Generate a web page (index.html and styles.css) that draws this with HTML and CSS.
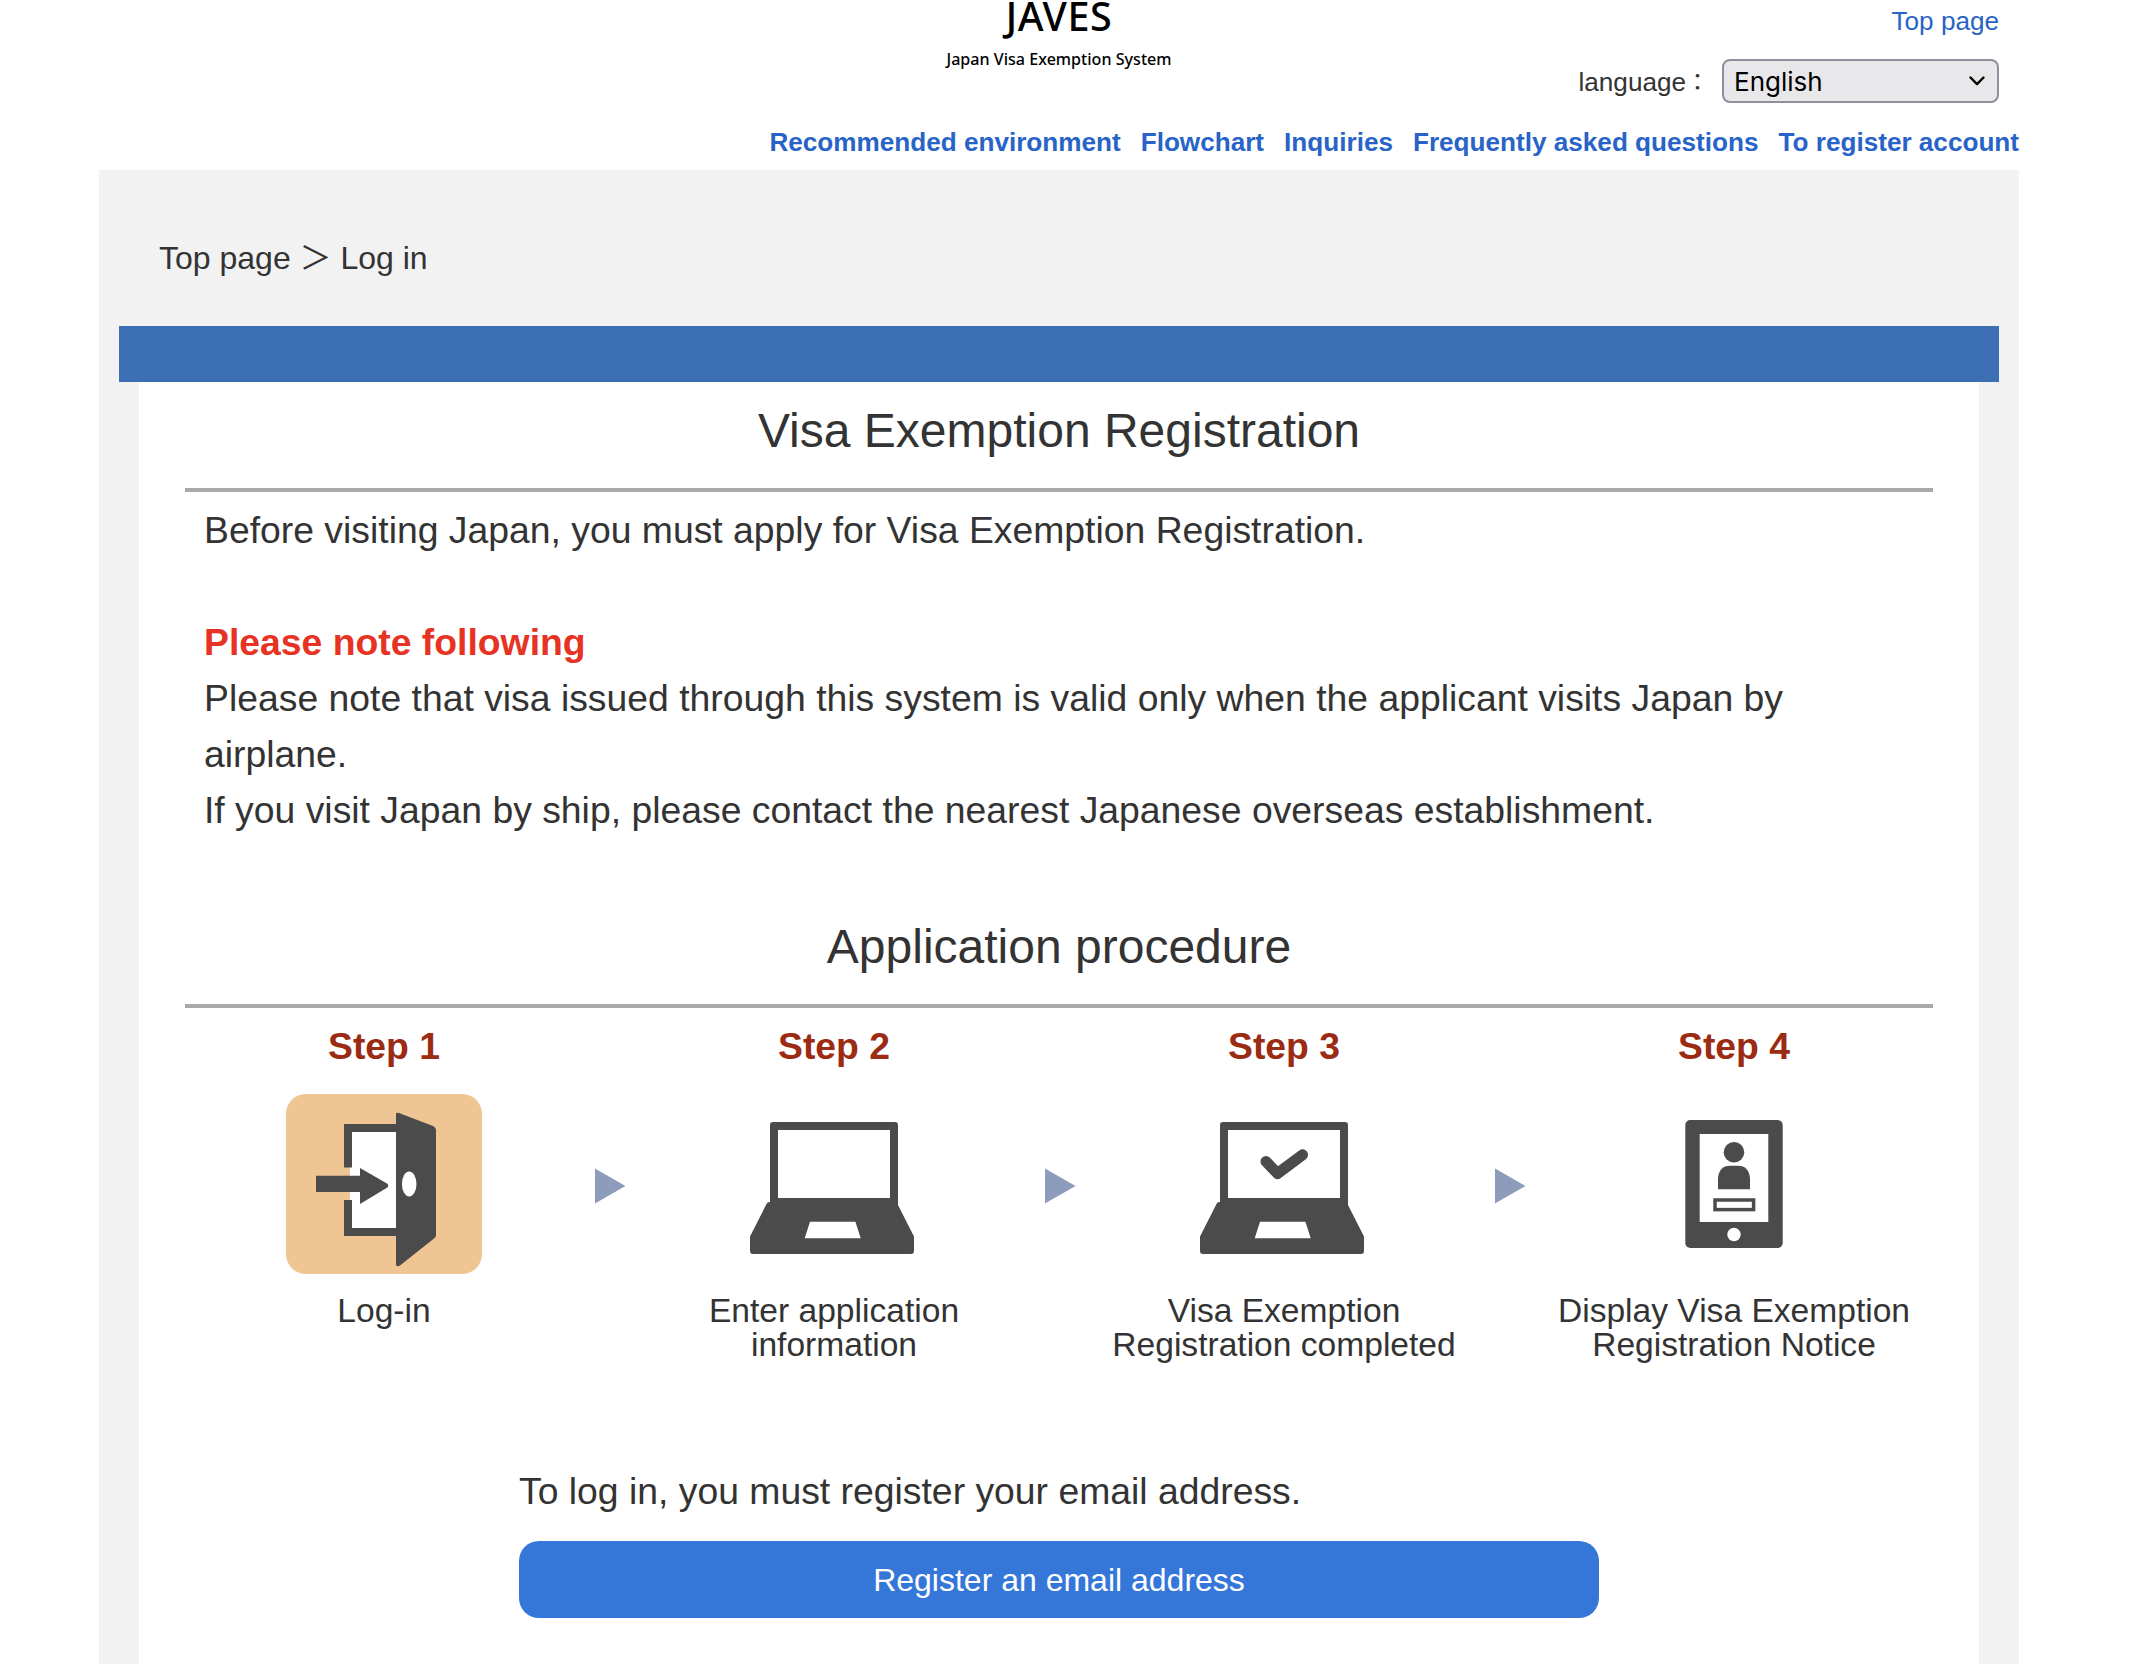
FILE: index.html
```html
<!DOCTYPE html>
<html lang="en">
<head>
<meta charset="utf-8">
<title>JAVES - Japan Visa Exemption System</title>
<link rel="stylesheet" href="styles.css">
</head>
<body>
<div class="page">
  <header class="header">
    <div class="header-main">
      <div class="logo">
        <div class="logo-name">JAVES</div>
        <div class="logo-sub">Japan Visa Exemption System</div>
      </div>
      <div class="tools">
        <a class="top-link" href="#">Top page</a>
        <div class="language">
          <span class="language-label">language<span class="colon">：</span></span>
          <div class="select" role="combobox" aria-expanded="false" tabindex="0">
            <span>English</span>
            <svg class="chevron" viewBox="0 0 16 10"><path d="M1.5 1.5 8 8.2 14.5 1.5"/></svg>
          </div>
        </div>
      </div>
    </div>
    <nav class="nav">
      <a href="#">Recommended environment</a>
      <a href="#">Flowchart</a>
      <a href="#">Inquiries</a>
      <a href="#">Frequently asked questions</a>
      <a href="#">To register account</a>
    </nav>
  </header>
  <main class="main">
    <div class="breadcrumb">Top page ＞ Log in</div>
    <div class="band"></div>
    <div class="content">
      <h1 class="heading">Visa Exemption Registration</h1>
      <div class="copy">
        <p>Before visiting Japan, you must apply for Visa Exemption Registration.</p>
        <p class="notice">Please note following</p>
        <p>Please note that visa issued through this system is valid only when the applicant visits Japan by airplane.</p>
        <p>If you visit Japan by ship, please contact the nearest Japanese overseas establishment.</p>
      </div>
      <h2 class="heading heading-procedure">Application procedure</h2>
      <div class="steps">
        <div class="step">
          <div class="step-name">Step 1</div>
          <svg class="icon icon-current" viewBox="0 0 196 180">
            <path class="paper" d="M64 34h48v104H64z"/>
            <path class="ink" d="M58 30h54v8H66v35.5h-8zM58 106h8v28h46v8H58z"/>
            <path class="ink" d="M110 20q0-2 3-1l34 13q3 1.300 3 4v105q0 2-2 3.500l-34 27q-4 2-4-1z"/>
            <ellipse class="paper" cx="123.200" cy="90" rx="7.300" ry="12.500"/>
            <path class="ink" d="M30 81.700h44V74l27 15.500q2.500 2.200 0 4.200L74 110V98H30z"/>
          </svg>
          <div class="step-text">Log-in</div>
        </div>
        <div class="next"><svg class="arrow" viewBox="0 0 32 36"><path d="M1 .5 31.500 18 1 35.500z"/></svg></div>
        <div class="step">
          <div class="step-name">Step 2</div>
          <svg class="icon" viewBox="0 0 196 180">
            <path class="ink" fill-rule="evenodd" d="M34 31q0-3 3-3h122q3 0 3 3v80l16 31.500V157q0 3-3 3H17q-3 0-3-3v-14.500L31 109q1-1 3-1zM42 36v68h112V36zM74 127.700l-5.300 16.600h56l-5.300-16.600z"/>
          </svg>
          <div class="step-text">Enter application<br>information</div>
        </div>
        <div class="next"><svg class="arrow" viewBox="0 0 32 36"><path d="M1 .5 31.500 18 1 35.500z"/></svg></div>
        <div class="step">
          <div class="step-name">Step 3</div>
          <svg class="icon" viewBox="0 0 196 180">
            <path class="ink" fill-rule="evenodd" d="M34 31q0-3 3-3h122q3 0 3 3v80l16 31.500V157q0 3-3 3H17q-3 0-3-3v-14.500L31 109q1-1 3-1zM42 36v68h112V36zM74 127.700l-5.300 16.600h56l-5.300-16.600z"/>
            <path class="tick" d="M80 67.500 91.500 79.500 116.500 60.800"/>
          </svg>
          <div class="step-text">Visa Exemption<br>Registration completed</div>
        </div>
        <div class="next"><svg class="arrow" viewBox="0 0 32 36"><path d="M1 .5 31.500 18 1 35.500z"/></svg></div>
        <div class="step">
          <div class="step-name">Step 4</div>
          <svg class="icon" viewBox="0 0 196 180">
            <rect class="ink" x="49.300" y="26" width="97.400" height="128" rx="5"/>
            <path class="paper" d="M63.700 40h68.600v88H63.700z"/>
            <circle class="ink" cx="98" cy="58.300" r="10.300"/>
            <path class="ink" d="M82 95.300V84.500Q83 71.700 94 71.700h8q11 0 12 12.800v10.800z"/>
            <rect class="field" x="79" y="106" width="38.600" height="9.600"/>
            <circle class="paper" cx="98" cy="140.500" r="6.700"/>
          </svg>
          <div class="step-text">Display Visa Exemption<br>Registration Notice</div>
        </div>
      </div>
      <div class="register">
        <p>To log in, you must register your email address.</p>
        <a class="button" href="#">Register an email address</a>
      </div>
    </div>
  </main>
</div>
</body>
</html>
```

FILE: styles.css
```css
* {
  box-sizing: border-box;
}

body {
  margin: 0;
  background: #fff;
  color: #333;
  font-family: "Liberation Sans", "Noto Sans CJK JP", sans-serif;
  overflow: hidden;
}

a {
  color: #2864c7;
  text-decoration: none;
}

p {
  margin: 0;
}

.page {
  display: flex;
  flex-direction: column;
  width: 1920px;
  height: 1664px;
  margin-left: 99px;
}

.header {
  height: 170px;
  flex: none;
}

.header-main {
  display: grid;
  grid-template-columns: 1fr 400px 1fr;
  height: 114px;
}

.logo {
  grid-column: 2;
  color: #000;
  font-family: "Noto Sans", sans-serif;
  text-align: center;
}

.logo-name {
  height: 47px;
  font-size: 39.5px;
  font-weight: 500;
  letter-spacing: 0.5px;
  line-height: 33px;
}

.logo-sub {
  font-size: 16.1px;
  font-weight: 500;
  line-height: 24px;
  white-space: nowrap;
}

.tools {
  display: flex;
  flex-direction: column;
  align-items: flex-end;
  padding-right: 20px;
  font-size: 26.13px;
}

.top-link {
  height: 48px;
  line-height: 42px;
}

.language {
  display: flex;
  align-items: center;
  gap: 13px;
  height: 66px;
}

.language-label {
  padding-top: 2px;
  line-height: 46px;
}

.colon {
  font-size: 23px;
  vertical-align: 1px;
}

.select {
  display: flex;
  align-items: center;
  justify-content: space-between;
  width: 277px;
  height: 44px;
  padding: 0 12px 0 10px;
  border: 2px solid #8f8f9d;
  border-radius: 8px;
  background: #e8e8ea;
  color: #000;
  font-family: Inter, sans-serif;
  font-size: 26px;
}

.chevron {
  width: 16px;
  height: 10px;
  fill: none;
  stroke: #000;
  stroke-width: 2.4;
  stroke-linecap: round;
  stroke-linejoin: round;
}

.nav {
  display: flex;
  justify-content: flex-end;
  gap: 20px;
  font-size: 26.13px;
  font-weight: 700;
  line-height: 56px;
}

.main {
  flex: 1;
  padding: 0 20px;
  background: #f2f2f2;
  display: flex;
  flex-direction: column;
}

.breadcrumb {
  height: 156px;
  padding: 60px 0 0 40px;
  font-size: 32px;
  line-height: 56px;
}

.band {
  height: 56px;
  background: #3b6eb3;
}

.content {
  flex: 1;
  margin: 0 20px;
  padding: 0 46px;
  background: #fff;
}

.heading {
  height: 110px;
  margin: 0;
  padding-top: 13px;
  border-bottom: 4px solid #a9a9a9;
  font-size: 48px;
  font-weight: 400;
  line-height: 72px;
  text-align: center;
}

.copy {
  padding: 10px 18px 0 19px;
  font-size: 37.33px;
  line-height: 56px;
}

.notice {
  margin-top: 56px;
  color: #e63323;
  font-weight: 700;
}

.heading-procedure {
  margin-top: 60px;
}

.steps {
  display: flex;
  padding: 10px 0 0 19px;
}

.step {
  display: flex;
  flex-direction: column;
  align-items: center;
  width: 360px;
}

.step-name {
  color: #9c2b14;
  font-size: 37.33px;
  font-weight: 700;
  line-height: 56px;
}

.icon {
  width: 196px;
  height: 180px;
  margin: 20px 0;
  border-radius: 20px;
}

.icon-current {
  background: #efc594;
}

.ink {
  fill: #4b4b4b;
}

.paper {
  fill: #fff;
}

.tick {
  fill: none;
  stroke: #4b4b4b;
  stroke-width: 11;
  stroke-linecap: round;
  stroke-linejoin: round;
}

.field {
  fill: none;
  stroke: #4b4b4b;
  stroke-width: 3.5;
}

.step-text {
  font-size: 33.6px;
  line-height: 34px;
  text-align: center;
  white-space: nowrap;
}

.next {
  width: 90px;
  padding: 150px 0 0 30px;
}

.arrow {
  display: block;
  width: 32px;
  height: 36px;
  fill: #8d9cbb;
}

.register {
  width: 1080px;
  margin: 101px auto 0;
  font-size: 37.33px;
  line-height: 56px;
}

.button {
  display: block;
  height: 77px;
  margin-top: 22px;
  border-radius: 20px;
  background: #3576d9;
  color: #fff;
  font-size: 32px;
  line-height: 79px;
  text-align: center;
}
```
